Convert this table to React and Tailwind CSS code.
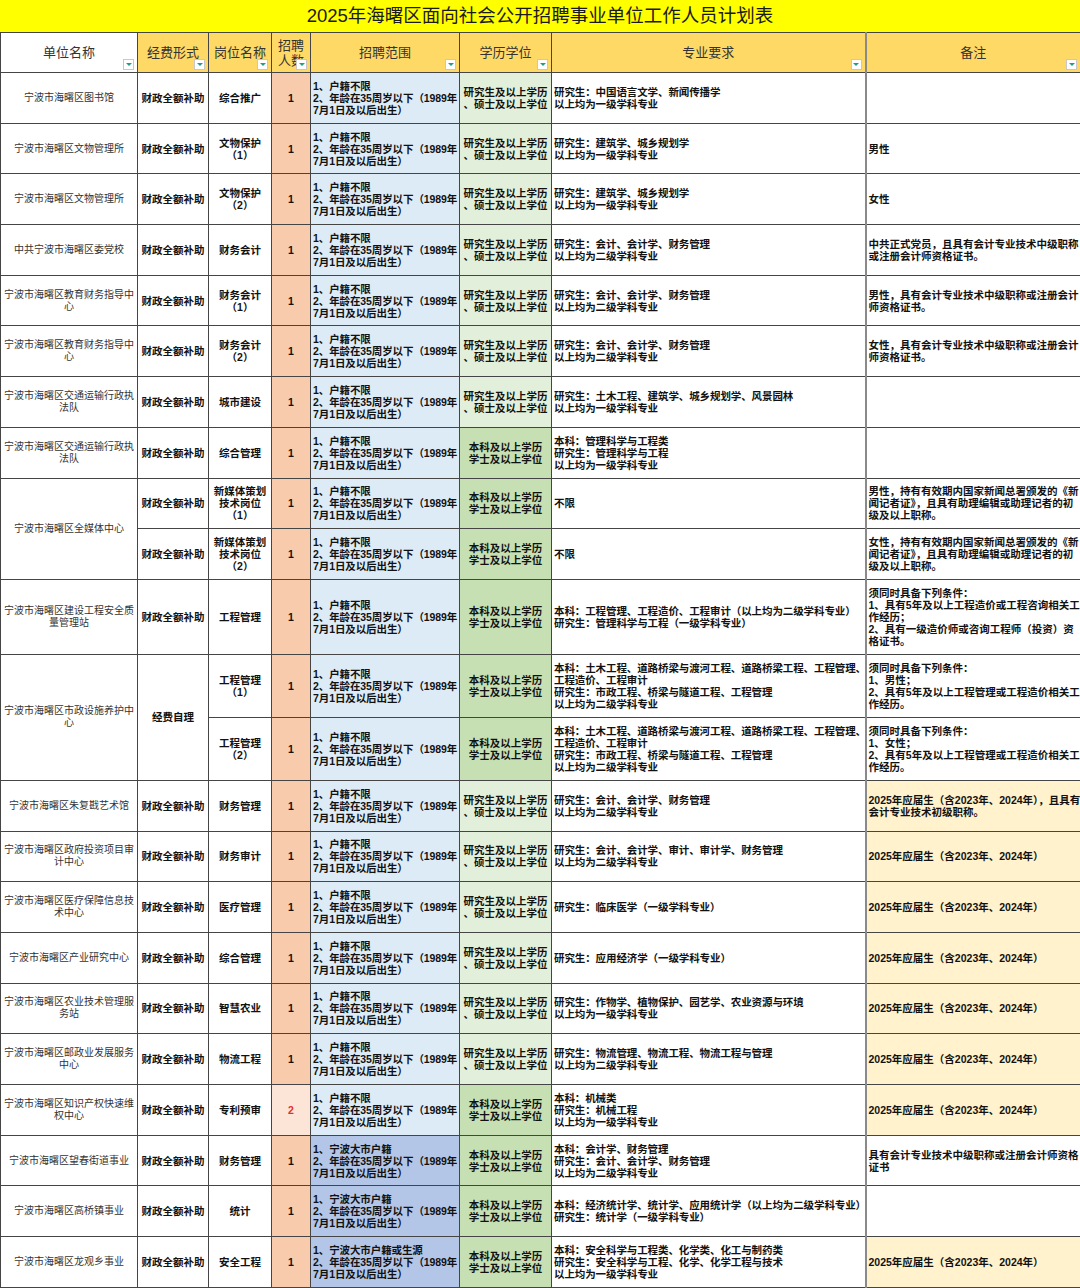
import React from 'react'

const GRAD_A = ['研究生及以上学历', '、硕士及以上学位']
const GRAD_B = ['本科及以上学历', '学士及以上学位']
const RANGE = (first) => [first, '2、年龄在35周岁以下（1989年', '7月1日及以后出生）']
const FRESH = ['2025年应届生（含2023年、2024年）']
const ACC = ['研究生：会计、会计学、财务管理', '以上均为二级学科专业']
const ENG_MAJOR = [
  '本科：土木工程、道路桥梁与渡河工程、道路桥梁工程、工程管理、',
  '工程造价、工程审计',
  '研究生：市政工程、桥梁与隧道工程、工程管理',
  '以上均为二级学科专业',
]

const rows = [
  { h: 'n', unit: ['宁波市海曙区图书馆'], post: ['综合推广'], edu: 'a', major: ['研究生：中国语言文学、新闻传播学', '以上均为一级学科专业'], note: [] },
  { h: 'n', unit: ['宁波市海曙区文物管理所'], post: ['文物保护', '（1）'], edu: 'a', major: ['研究生：建筑学、城乡规划学', '以上均为一级学科专业'], note: ['男性'] },
  { h: 'n', unit: ['宁波市海曙区文物管理所'], post: ['文物保护', '（2）'], edu: 'a', major: ['研究生：建筑学、城乡规划学', '以上均为一级学科专业'], note: ['女性'] },
  { h: 'n', unit: ['中共宁波市海曙区委党校'], post: ['财务会计'], edu: 'a', major: ACC, note: ['中共正式党员，且具有会计专业技术中级职称', '或注册会计师资格证书。'] },
  { h: 'n', unit: ['宁波市海曙区教育财务指导中', '心'], post: ['财务会计', '（1）'], edu: 'a', major: ACC, note: ['男性，具有会计专业技术中级职称或注册会计', '师资格证书。'] },
  { h: 'n', unit: ['宁波市海曙区教育财务指导中', '心'], post: ['财务会计', '（2）'], edu: 'a', major: ACC, note: ['女性，具有会计专业技术中级职称或注册会计', '师资格证书。'] },
  { h: 'n', unit: ['宁波市海曙区交通运输行政执', '法队'], post: ['城市建设'], edu: 'a', major: ['研究生：土木工程、建筑学、城乡规划学、风景园林', '以上均为一级学科专业'], note: [] },
  { h: 'n', unit: ['宁波市海曙区交通运输行政执', '法队'], post: ['综合管理'], edu: 'b', major: ['本科：管理科学与工程类', '研究生：管理科学与工程', '以上均为一级学科专业'], note: [] },
  { h: 'n', unit: ['宁波市海曙区全媒体中心'], unitSpan: 2, post: ['新媒体策划', '技术岗位', '（1）'], edu: 'b', major: ['不限'], note: ['男性，持有有效期内国家新闻总署颁发的《新', '闻记者证》，且具有助理编辑或助理记者的初', '级及以上职称。'] },
  { h: 'n', skipUnit: true, post: ['新媒体策划', '技术岗位', '（2）'], edu: 'b', major: ['不限'], note: ['女性，持有有效期内国家新闻总署颁发的《新', '闻记者证》，且具有助理编辑或助理记者的初', '级及以上职称。'] },
  { h: 'l', unit: ['宁波市海曙区建设工程安全质', '量管理站'], post: ['工程管理'], edu: 'b', major: ['本科：工程管理、工程造价、工程审计（以上均为二级学科专业）', '研究生：管理科学与工程（一级学科专业）'], note: ['须同时具备下列条件：', '1、具有5年及以上工程造价或工程咨询相关工', '作经历；', '2、具有一级造价师或咨询工程师（投资）资', '格证书。'] },
  { h: 'm', unit: ['宁波市海曙区市政设施养护中', '心'], unitSpan: 2, fund: '经费自理', fundSpan: 2, post: ['工程管理', '（1）'], edu: 'b', major: ENG_MAJOR, note: ['须同时具备下列条件：', '1、男性；', '2、具有5年及以上工程管理或工程造价相关工', '作经历。'] },
  { h: 'm', skipUnit: true, skipFund: true, post: ['工程管理', '（2）'], edu: 'b', major: ENG_MAJOR, note: ['须同时具备下列条件：', '1、女性；', '2、具有5年及以上工程管理或工程造价相关工', '作经历。'] },
  { h: 'n', unit: ['宁波市海曙区朱复戡艺术馆'], post: ['财务管理'], edu: 'a', major: ACC, note: ['2025年应届生（含2023年、2024年），且具有', '会计专业技术初级职称。'], noteY: true },
  { h: 'n', unit: ['宁波市海曙区政府投资项目审', '计中心'], post: ['财务审计'], edu: 'a', major: ['研究生：会计、会计学、审计、审计学、财务管理', '以上均为二级学科专业'], note: FRESH, noteY: true },
  { h: 'n', unit: ['宁波市海曙区医疗保障信息技', '术中心'], post: ['医疗管理'], edu: 'a', major: ['研究生：临床医学（一级学科专业）'], note: FRESH, noteY: true },
  { h: 'n', unit: ['宁波市海曙区产业研究中心'], post: ['综合管理'], edu: 'a', major: ['研究生：应用经济学（一级学科专业）'], note: FRESH, noteY: true },
  { h: 'n', unit: ['宁波市海曙区农业技术管理服', '务站'], post: ['智慧农业'], edu: 'a', major: ['研究生：作物学、植物保护、园艺学、农业资源与环境', '以上均为一级学科专业'], note: FRESH, noteY: true },
  { h: 'n', unit: ['宁波市海曙区邮政业发展服务', '中心'], post: ['物流工程'], edu: 'a', major: ['研究生：物流管理、物流工程、物流工程与管理', '以上均为二级学科专业'], note: FRESH, noteY: true },
  { h: 'n', unit: ['宁波市海曙区知识产权快速维', '权中心'], post: ['专利预审'], num: 2, edu: 'b', major: ['本科：机械类', '研究生：机械工程', '以上均为一级学科专业'], note: FRESH, noteY: true },
  { h: 'n', unit: ['宁波市海曙区望春街道事业'], post: ['财务管理'], range: '1、宁波大市户籍', edu: 'b', major: ['本科：会计学、财务管理', '研究生：会计、会计学、财务管理', '以上均为二级学科专业'], note: ['具有会计专业技术中级职称或注册会计师资格', '证书'] },
  { h: 'n', unit: ['宁波市海曙区高桥镇事业'], post: ['统计'], range: '1、宁波大市户籍', edu: 'b', major: ['本科：经济统计学、统计学、应用统计学（以上均为二级学科专业）', '研究生：统计学（一级学科专业）'], note: [] },
  { h: 'n', unit: ['宁波市海曙区龙观乡事业'], post: ['安全工程'], range: '1、宁波大市户籍或生源', edu: 'b', major: ['本科：安全科学与工程类、化学类、化工与制药类', '研究生：安全科学与工程、化学、化学工程与技术', '以上均为一级学科专业'], note: FRESH, noteY: true },
]

const Lines = ({ lines }) => lines.map((l, i) => <div key={i} className="whitespace-nowrap">{l}</div>)

const Filter = () => (
  <span className="absolute right-[3px] bottom-[2px] w-[11px] h-[11px] bg-white border border-[#c8c8c8] flex items-center justify-center">
    <span className="w-0 h-0 border-l-[3px] border-r-[3px] border-t-[3px] border-l-transparent border-r-transparent border-t-[#1f9e8a]" />
  </span>
)

const cell = 'border border-[#454545] px-[2px] py-0 align-middle text-[10.5px] leading-[12px] overflow-hidden'
const bold = 'font-bold text-[#111]'
const tight = 'text-[10.1px] tracking-[-0.1px]'

const headers = [
  { t: ['单位名称'], bg: 'bg-white' },
  { t: ['经费形式'], bg: 'bg-[#ffd966]' },
  { t: ['岗位名称'], bg: 'bg-[#ffd966]' },
  { t: ['招聘', '人数'], bg: 'bg-[#ffd966]' },
  { t: ['招聘范围'], bg: 'bg-[#ffd966]' },
  { t: ['学历学位'], bg: 'bg-[#ffd966]' },
  { t: ['专业要求'], bg: 'bg-[#ffd966]' },
  { t: ['备注'], bg: 'bg-[#ffd966]', last: true },
]

export default function App() {
  return (
    <div className="w-[1080px] h-[1288px] overflow-hidden bg-white font-['Liberation_Sans','Noto_Sans_CJK_SC',sans-serif] text-[#222]">
      <div className="h-[33px] bg-[#ffff00] border-b border-[#454545] flex items-center justify-center text-[18.5px] leading-none text-[#1a1a1a]">
        2025年海曙区面向社会公开招聘事业单位工作人员计划表
      </div>
      <table className="table-fixed border-collapse w-[1080px] -mt-px">
        <colgroup>
          <col className="w-[137px]" />
          <col className="w-[71px]" />
          <col className="w-[63px]" />
          <col className="w-[39px]" />
          <col className="w-[149px]" />
          <col className="w-[92px]" />
          <col className="w-[314px]" />
          <col className="w-[215px]" />
        </colgroup>
        <tbody>
          <tr className="h-[40px]">
            {headers.map((hd, i) => (
              <td
                key={i}
                className={`relative border border-[#454545] ${hd.last ? 'border-l-2 border-l-[#8a8a8a]' : ''} ${hd.bg} text-center align-middle text-[13px] leading-[15px] text-[#333] p-0 overflow-hidden`}
              >
                {hd.t.map((l, j) => (
                  <div key={j}>{l}</div>
                ))}
                <Filter />
              </td>
            ))}
          </tr>
          {rows.map((r, i) => {
            const hClass = r.h === 'l' ? 'h-[75px]' : r.h === 'm' ? 'h-[63px]' : 'h-[50.7px]'
            const dark = !!r.range
            return (
              <tr key={i} className={hClass}>
                {!r.skipUnit && (
                  <td rowSpan={r.unitSpan || 1} className={`${cell} text-center text-[10px] text-[#333] bg-white`}>
                    <Lines lines={r.unit} />
                  </td>
                )}
                {!r.skipFund && (
                  <td rowSpan={r.fundSpan || 1} className={`${cell} ${bold} text-center bg-white`}>
                    {r.fund || '财政全额补助'}
                  </td>
                )}
                <td className={`${cell} ${bold} text-center bg-white`}>
                  <Lines lines={r.post} />
                </td>
                <td className={`${cell} text-center font-bold ${r.num === 2 ? 'bg-[#fce4d6] text-[#e03030]' : 'bg-[#f8cbad] text-[#111]'}`}>
                  {r.num || 1}
                </td>
                <td className={`${cell} ${bold} ${tight} text-left ${dark ? 'bg-[#b4c6e7]' : 'bg-[#ddebf7]'}`}>
                  <Lines lines={RANGE(r.range || '1、户籍不限')} />
                </td>
                <td className={`${cell} ${bold} text-center ${r.edu === 'a' ? 'bg-[#e2efda]' : 'bg-[#c6e0b4]'}`}>
                  <Lines lines={r.edu === 'a' ? GRAD_A : GRAD_B} />
                </td>
                <td className={`${cell} ${bold} ${tight} text-left bg-white`}>
                  <Lines lines={r.major} />
                </td>
                <td className={`${cell} ${bold} text-left border-l-2 border-l-[#8a8a8a] ${r.noteY ? 'bg-[#fff2cc]' : 'bg-white'}`}>
                  <Lines lines={r.note} />
                </td>
              </tr>
            )
          })}
        </tbody>
      </table>
    </div>
  )
}
